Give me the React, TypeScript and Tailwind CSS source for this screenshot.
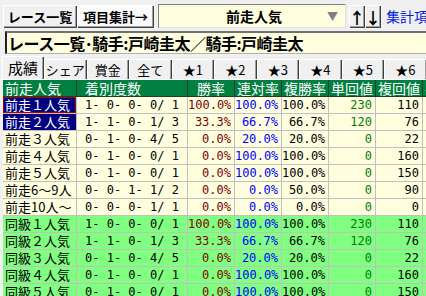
import React from 'react';

type Row = {
  label: string;
  record: string;
  win: string;
  place2: string;
  place3: string;
  winReturn: string;
  placeReturn: string;
  kind: 'prev' | 'same';
};

const rows: Row[] = [
  { label: '前走１人気', record: '1- 0- 0- 0/ 1', win: '100.0%', place2: '100.0%', place3: '100.0%', winReturn: '230', placeReturn: '110', kind: 'prev' },
  { label: '前走２人気', record: '1- 1- 0- 1/ 3', win: '33.3%', place2: '66.7%', place3: '66.7%', winReturn: '120', placeReturn: '76', kind: 'prev' },
  { label: '前走３人気', record: '0- 1- 0- 4/ 5', win: '0.0%', place2: '20.0%', place3: '20.0%', winReturn: '0', placeReturn: '22', kind: 'prev' },
  { label: '前走４人気', record: '0- 1- 0- 0/ 1', win: '0.0%', place2: '100.0%', place3: '100.0%', winReturn: '0', placeReturn: '160', kind: 'prev' },
  { label: '前走５人気', record: '0- 1- 0- 0/ 1', win: '0.0%', place2: '100.0%', place3: '100.0%', winReturn: '0', placeReturn: '150', kind: 'prev' },
  { label: '前走6～9人', record: '0- 0- 1- 1/ 2', win: '0.0%', place2: '0.0%', place3: '50.0%', winReturn: '0', placeReturn: '90', kind: 'prev' },
  { label: '前走10人～', record: '0- 0- 0- 1/ 1', win: '0.0%', place2: '0.0%', place3: '0.0%', winReturn: '0', placeReturn: '0', kind: 'prev' },
  { label: '同級１人気', record: '1- 0- 0- 0/ 1', win: '100.0%', place2: '100.0%', place3: '100.0%', winReturn: '230', placeReturn: '110', kind: 'same' },
  { label: '同級２人気', record: '1- 1- 0- 1/ 3', win: '33.3%', place2: '66.7%', place3: '66.7%', winReturn: '120', placeReturn: '76', kind: 'same' },
  { label: '同級３人気', record: '0- 1- 0- 4/ 5', win: '0.0%', place2: '20.0%', place3: '20.0%', winReturn: '0', placeReturn: '22', kind: 'same' },
  { label: '同級４人気', record: '0- 1- 0- 0/ 1', win: '0.0%', place2: '100.0%', place3: '100.0%', winReturn: '0', placeReturn: '160', kind: 'same' },
  { label: '同級５人気', record: '0- 1- 0- 0/ 1', win: '0.0%', place2: '100.0%', place3: '100.0%', winReturn: '0', placeReturn: '150', kind: 'same' },
];

const tabs = ['シェア', '賞金', '全て', '★1', '★2', '★3', '★4', '★5', '★6'];

const raised =
  'shadow-[inset_1px_1px_0_#ffffff,inset_-1px_-1px_0_#404040,inset_-2px_-2px_0_#a0a0a0]';

const tabEdge =
  'shadow-[inset_1px_1px_0_#ffffff,inset_-1px_0_0_#404040,inset_-2px_0_0_#a0a0a0]';

export default function App() {
  return (
    <div className="h-[296px] w-[426px] overflow-hidden bg-[#f0f0f0] font-['Noto_Sans_CJK_JP',sans-serif] text-black">
      {/* toolbar */}
      <div className="flex h-[31px] items-start overflow-hidden pl-[3px] pt-[4px]">
        <div className={`mt-[1px] flex h-[23px] w-[74px] shrink-0 items-center justify-center bg-[#f0f0f0] text-[13px] font-bold leading-none ${raised}`}>
          レース一覧
        </div>
        <div className={`mt-[1px] flex h-[23px] w-[77px] shrink-0 items-center justify-center bg-[#fafafa] text-[13px] font-bold leading-none ${raised}`}>
          項目集計→
        </div>
        <div className="ml-[4px] flex h-[24px] w-[188px] shrink-0 items-center border border-t-[#808080] border-l-[#808080] border-b-[#e0e0e0] border-r-[#e0e0e0] bg-[#ffffe0]">
          <span className="ml-[67px] flex-1 text-[14px] font-bold leading-none">前走人気</span>
          <span className="mr-[7px] text-[11px] leading-none text-[#808080]">▼</span>
        </div>
        <div className={`ml-[3px] mt-[1px] flex h-[23px] w-[16px] shrink-0 items-center justify-center text-[16px] font-bold leading-none ${raised}`}>↑</div>
        <div className={`mt-[1px] flex h-[23px] w-[16px] shrink-0 items-center justify-center text-[16px] font-bold leading-none ${raised}`}>↓</div>
        <span className="ml-[5px] mt-[5px] shrink-0 whitespace-nowrap text-[14px] leading-none text-[#0020e0]">集計項目</span>
      </div>

      {/* title */}
      <div className="ml-[5px] flex h-[23px] items-center border-t-2 border-l-2 border-b border-t-[#707070] border-l-[#202020] border-b-[#b0b0b0] bg-[#ffffe0] pl-[1px]">
        <span className="whitespace-nowrap text-[16px] font-bold leading-none tracking-[-0.5px]">レース一覧･騎手:戸崎圭太／騎手:戸崎圭太</span>
      </div>

      {/* tabs */}
      <div className="mt-[2px] flex h-[24px] items-end border-b border-b-white pl-[2px]">
        <div className={`flex h-[23px] w-[42px] shrink-0 items-center justify-center bg-[#f0f0f0] text-[15px] leading-none ${tabEdge}`}>
          成績
        </div>
        {tabs.map((t) => (
          <div
            key={t}
            className={`flex h-[20px] w-[42.5px] shrink-0 items-center justify-center whitespace-nowrap bg-[#f0f0f0] text-[13px] leading-none ${tabEdge}`}
          >
            {t}
          </div>
        ))}
      </div>

      {/* table */}
      <div className="ml-[3px]">
        <div className="flex h-[17px] bg-[#008040] text-[14px] leading-[16px] text-white">
          <div className="w-[74px] shrink-0 border-r border-b border-[#1d3d2a] pl-[2px]">前走人気</div>
          <div className="w-[111px] shrink-0 border-r border-b border-[#1d3d2a] pl-[8px]">着別度数</div>
          {['勝率', '連対率', '複勝率', '単回値', '複回値'].map((h) => (
            <div key={h} className="w-[47px] shrink-0 whitespace-nowrap border-r border-b border-[#1d3d2a] text-center">
              {h}
            </div>
          ))}
          <div className="w-[20px] shrink-0 border-b border-[#1d3d2a] pl-[2px]">平</div>
        </div>
        {rows.map((r, i) => {
          const bg = r.kind === 'same' ? 'bg-[#80ff80]' : 'bg-[#ffffe0]';
          const labelCls =
            i === 0
              ? 'bg-[#000080] text-white shadow-[inset_0_0_0_1px_#b00000]'
              : i === 1
                ? 'bg-[#000080] text-white'
                : '';
          const num = "shrink-0 border-r border-b border-[#c0c0c0] text-right pr-[3px] font-['DejaVu_Sans_Mono',monospace] text-[12px] whitespace-pre";
          return (
            <div key={r.label + i} className={`flex h-[17px] leading-[16px] ${bg}`}>
              <div className={`w-[74px] shrink-0 whitespace-nowrap border-r border-b border-[#c0c0c0] pl-[2px] text-[13px] ${labelCls}`}>
                {r.label}
              </div>
              <div className="w-[111px] shrink-0 border-r border-b border-[#c0c0c0] pl-[8px] font-['DejaVu_Sans_Mono',monospace] text-[12px] whitespace-pre">
                {r.record}
              </div>
              <div className={`w-[47px] text-[#800000] ${num}`}>{r.win}</div>
              <div className={`w-[47px] text-[#0000ff] ${num}`}>{r.place2}</div>
              <div className={`w-[47px] ${num}`}>{r.place3}</div>
              <div className={`w-[47px] text-[#008000] ${num}`}>{r.winReturn}</div>
              <div className={`w-[47px] ${num}`}>{r.placeReturn}</div>
              <div className="w-[20px] shrink-0 border-b border-[#c0c0c0]" />
            </div>
          );
        })}
      </div>
    </div>
  );
}
